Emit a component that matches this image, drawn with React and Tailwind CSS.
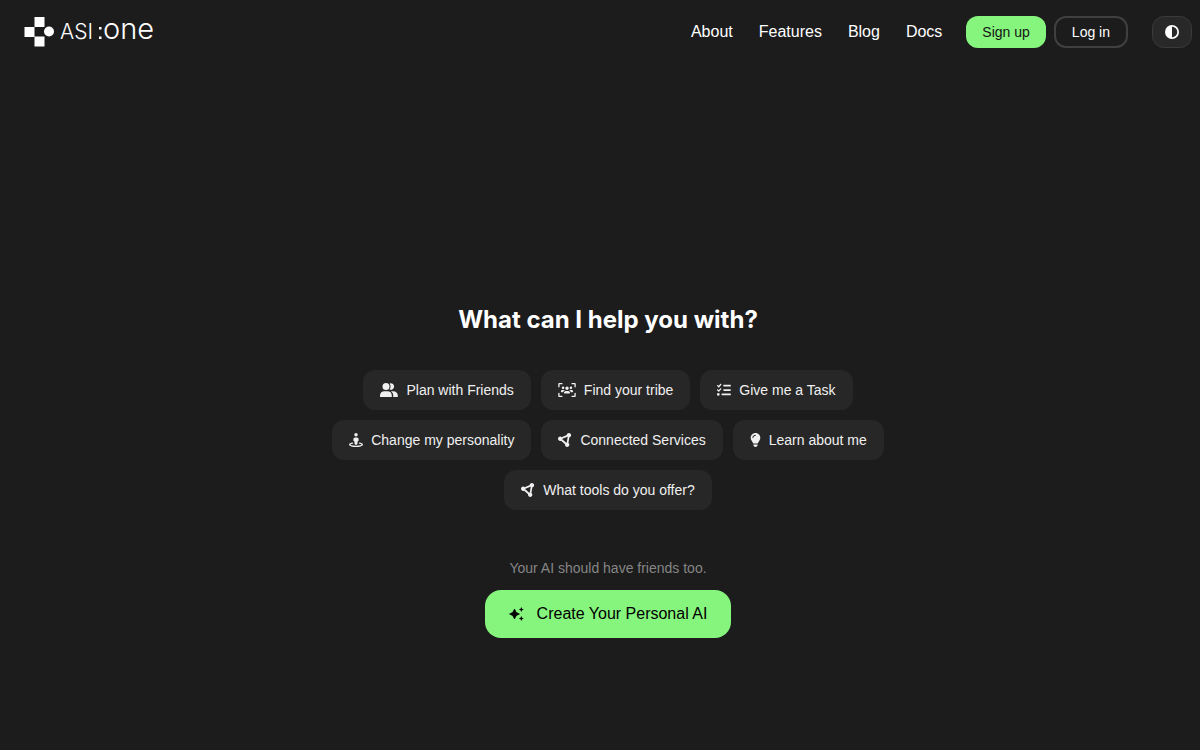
import React from "react";
import {
  FaUsersViewfinder,
  FaListCheck,
  FaStreetView,
  FaCircleNodes,
  FaLightbulb,
  FaCircleHalfStroke,
} from "react-icons/fa6";

const links = ["About", "Features", "Blog", "Docs"];

function PeopleIcon() {
  return (
    <svg width="18" height="14" viewBox="0 0 18 14" fill="currentColor" aria-hidden="true">
      <circle cx="6" cy="3.5" r="3.5" />
      <path d="M0 14v-1.6C0 9.8 2 8.2 4.4 8.2h3.2c2.4 0 4.2 1.6 4.2 4.200V14z" />
      <path d="M9.6.6a3.200 3.200 0 1 1 0 5.800c1.300-1.700 1.300-4.100 0-5.800z" />
      <path d="M10.800 8.200h2.400c2.600 0 4.600 1.700 4.600 4.200V14h-4.600v-1.800c0-1.700-.9-3.100-2.400-4z" />
    </svg>
  );
}

function SparklesIcon() {
  return (
    <svg width="16" height="16" viewBox="0 0 16 16" fill="currentColor" aria-hidden="true">
      <path d="M5.500 3 7.200 6.300 10.500 8 7.200 9.700 5.500 13 3.800 9.700.5 8 3.800 6.300z" stroke="currentColor" strokeWidth="0.6" strokeLinejoin="round" />
      <path d="M12.300 1l.8 1.700 1.700.8-1.700.8-.8 1.700-.8-1.700-1.700-.8 1.700-.8z" />
      <path d="M12.300 10l.8 1.700 1.700.8-1.700.8-.8 1.700-.8-1.700-1.700-.8 1.700-.8z" />
    </svg>
  );
}

const suggestionRows = [
  [
    { label: "Plan with Friends", icon: <PeopleIcon /> },
    { label: "Find your tribe", icon: <FaUsersViewfinder className="h-3.5 w-[18px]" /> },
    { label: "Give me a Task", icon: <FaListCheck className="size-3.5" /> },
  ],
  [
    { label: "Change my personality", icon: <FaStreetView className="size-3.5" /> },
    { label: "Connected Services", icon: <FaCircleNodes className="size-3.5" /> },
    { label: "Learn about me", icon: <FaLightbulb className="h-3.5 w-[11px]" /> },
  ],
  [{ label: "What tools do you offer?", icon: <FaCircleNodes className="size-3.5" /> }],
];

function Logo() {
  return (
    <a href="#" aria-label="ASI:One home" className="flex items-center">
      <svg width="136" height="44" viewBox="0 -6 136 44" fill="#fff" aria-hidden="true">
        <rect x="10.5" y="1" width="10" height="10" />
        <rect x="0.5" y="11" width="10" height="10" />
        <rect x="10.5" y="20.5" width="10" height="10" />
        <circle cx="25" cy="15.5" r="5" />
        <g fontFamily="Inter, sans-serif" fontWeight="300">
          <text x="36" y="23" fontSize="21">ASI</text>
          <rect x="75" y="11" width="2.5" height="2.5" />
          <rect x="75" y="20.5" width="2.5" height="2.5" />
          <text x="79" y="23" fontSize="29">one</text>
        </g>
      </svg>
    </a>
  );
}

function Header() {
  return (
    <header className="flex h-16 items-center justify-between pr-2 pl-6">
      <Logo />
      <div className="flex items-center gap-6">
        <nav className="flex items-center gap-[26px] text-base">
          {links.map((link) => (
            <a key={link} href="#">
              {link}
            </a>
          ))}
        </nav>
        <div className="flex items-center gap-2 text-sm">
          <button className="h-8 rounded-xl bg-[#86f57d] px-4 text-[#141414]">Sign up</button>
          <button className="h-8 rounded-xl border-2 border-[#404040] px-4">Log in</button>
        </div>
        <button
          aria-label="Toggle theme"
          className="flex h-8 w-10 items-center justify-center rounded-xl border border-[#3a3a3a] bg-[#282828]"
        >
          <FaCircleHalfStroke className="size-3.5" />
        </button>
      </div>
    </header>
  );
}

export default function App() {
  return (
    <div className="flex min-h-screen flex-col bg-[#1c1c1c] font-['Liberation_Sans',sans-serif] text-white">
      <Header />
      <main className="flex grow flex-col items-center pt-60 pl-4">
        <h1 className="font-['Inter',sans-serif] text-2xl font-bold">What can I help you with?</h1>
        <div className="mt-[34px] flex flex-col items-center gap-2.5">
          {suggestionRows.map((row) => (
            <div key={row[0].label} className="flex flex-wrap justify-center gap-2.5">
              {row.map(({ label, icon }) => (
                <button
                  key={label}
                  className="flex h-10 items-center gap-2 rounded-xl bg-[#272727] px-[17px] text-sm text-[#f0f0f0]"
                >
                  {icon}
                  {label}
                </button>
              ))}
            </div>
          ))}
        </div>
        <p className="mt-12 text-sm text-[#858585]">Your AI should have friends too.</p>
        <button className="mt-3 flex h-12 items-center gap-3 rounded-2xl bg-[#86f57d] px-6 text-base text-black">
          <SparklesIcon />
          Create Your Personal AI
        </button>
      </main>
    </div>
  );
}
